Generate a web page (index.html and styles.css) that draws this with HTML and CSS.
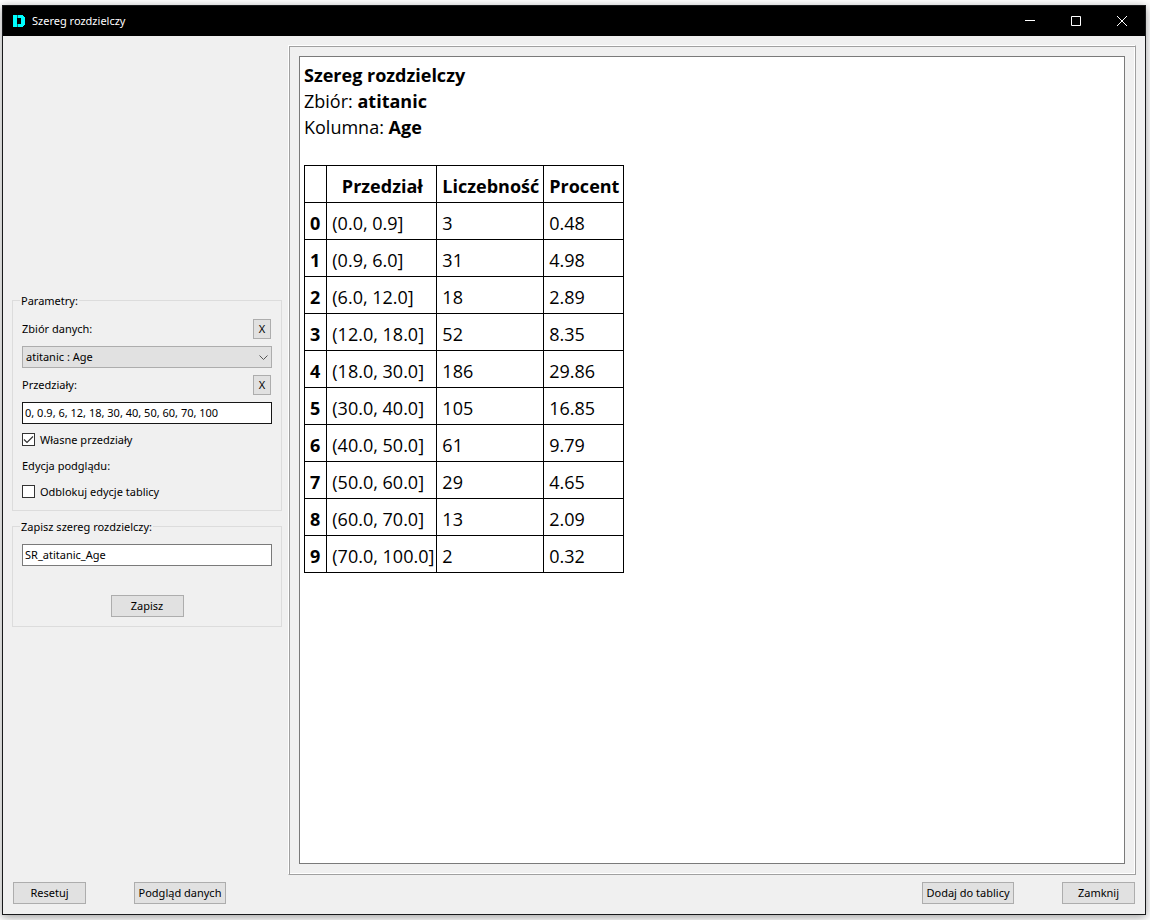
FILE: index.html
```html
<!DOCTYPE html>
<html lang="pl">
<head>
<meta charset="utf-8">
<title>Szereg rozdzielczy</title>
<link rel="stylesheet" href="styles.css">
</head>
<body>
<div class="window">
  <header class="titlebar">
    <svg class="logo" width="12" height="12" viewBox="0 0 12 12" aria-hidden="true"><path fill="#00ffff" d="M0 0H4V12H0ZM5 0H10V1H11V2H12V10H11V11H10V12H5V9H8V3H5Z"/><path fill="#007f7f" d="M4 0H5V3H4ZM4 9H5V12H4Z"/></svg>
    <h1 class="title">Szereg rozdzielczy</h1>
    <button class="caption" type="button" aria-label="Minimalizuj"><svg width="10" height="10" viewBox="0 0 10 10"><path d="M0 4.500H10"/></svg></button>
    <button class="caption" type="button" aria-label="Maksymalizuj"><svg width="10" height="10" viewBox="0 0 10 10"><path d="M.5 .5H9.500V9.500H.5Z"/></svg></button>
    <button class="caption" type="button" aria-label="Zamknij okno"><svg width="10" height="10" viewBox="0 0 10 10"><path d="M0 0L10 10M10 0L0 10"/></svg></button>
  </header>
  <main class="content">
    <form class="sidebar">
      <fieldset class="group params">
        <legend>Parametry:</legend>
        <div class="field-head"><label for="dataset">Zbiór danych:</label><button class="btn clear" type="button">X</button></div>
        <div class="combo">
          <select id="dataset" class="select"><option>atitanic : Age</option></select>
          <svg class="chevron" width="9" height="6" viewBox="0 0 9 6" aria-hidden="true"><path d="M.5 .5L4.500 4.500L8.500 .5"/></svg>
        </div>
        <div class="field-head"><label for="ranges">Przedziały:</label><button class="btn clear" type="button">X</button></div>
        <input id="ranges" class="input focused" type="text" value="0, 0.9, 6, 12, 18, 30, 40, 50, 60, 70, 100">
        <div class="options">
          <label class="check"><input type="checkbox" checked>Własne przedziały</label>
          <p class="caption-text">Edycja podglądu:</p>
          <label class="check"><input type="checkbox">Odblokuj edycje tablicy</label>
        </div>
      </fieldset>
      <fieldset class="group save">
        <legend>Zapisz szereg rozdzielczy:</legend>
        <input class="input" type="text" value="SR_atitanic_Age" aria-label="Zapisz szereg rozdzielczy">
        <button class="btn" type="button">Zapisz</button>
      </fieldset>
    </form>
    <div class="frame">
      <section class="preview">
        <h2>Szereg rozdzielczy</h2>
        <p>Zbiór: <b>atitanic</b></p>
        <p>Kolumna: <b>Age</b></p>
        <table class="series">
          <thead><tr><th></th><th>Przedział</th><th>Liczebność</th><th>Procent</th></tr></thead>
          <tbody>
            <tr><th>0</th><td>(0.0, 0.9]</td><td>3</td><td>0.48</td></tr>
            <tr><th>1</th><td>(0.9, 6.0]</td><td>31</td><td>4.98</td></tr>
            <tr><th>2</th><td>(6.0, 12.0]</td><td>18</td><td>2.89</td></tr>
            <tr><th>3</th><td>(12.0, 18.0]</td><td>52</td><td>8.35</td></tr>
            <tr><th>4</th><td>(18.0, 30.0]</td><td>186</td><td>29.86</td></tr>
            <tr><th>5</th><td>(30.0, 40.0]</td><td>105</td><td>16.85</td></tr>
            <tr><th>6</th><td>(40.0, 50.0]</td><td>61</td><td>9.79</td></tr>
            <tr><th>7</th><td>(50.0, 60.0]</td><td>29</td><td>4.65</td></tr>
            <tr><th>8</th><td>(60.0, 70.0]</td><td>13</td><td>2.09</td></tr>
            <tr><th>9</th><td>(70.0, 100.0]</td><td>2</td><td>0.32</td></tr>
          </tbody>
        </table>
      </section>
    </div>
  </main>
  <footer class="actions">
    <button class="btn" type="button">Resetuj</button>
    <button class="btn wide" type="button">Podgląd danych</button>
    <span class="spacer"></span>
    <button class="btn wide" type="button">Dodaj do tablicy</button>
    <button class="btn" type="button">Zamknij</button>
  </footer>
</div>
</body>
</html>
```
FILE: styles.css
```css
* { box-sizing: border-box; }

body {
  display: flex;
  min-height: 100vh;
  margin: 0;
  padding: 5px 4px 5px 2px;
  background: #fff;
  color: #000;
  font: 11px/16px "Segoe UI", "Noto Sans", "Open Sans", sans-serif;
}

h1, h2, p { margin: 0; font: inherit; }
button, input, select { font: inherit; color: inherit; }

.window {
  flex: 1;
  display: flex;
  flex-direction: column;
  border: 1px solid #18191b;
  background: #f0f0f0;
  box-shadow: 0 2px 9px rgba(0, 0, 0, .4);
}

.titlebar {
  display: flex;
  align-items: center;
  height: 30px;
  padding-left: 10px;
  background: #000;
  color: #fff;
}
.logo { margin-right: 7px; }
.title { flex: 1; }
.caption {
  display: flex;
  align-items: center;
  justify-content: center;
  width: 46px;
  height: 28px;
  padding: 0;
  border: 0;
  background: transparent;
}
.caption svg { fill: none; stroke: #fff; stroke-width: 1; }

.content {
  flex: 1;
  display: flex;
  gap: 6px;
  padding: 9px 9px 0;
}

.sidebar {
  display: flex;
  flex-direction: column;
  justify-content: center;
  gap: 8px;
  width: 270px;
  padding-bottom: 1px;
}
.group {
  display: flex;
  flex-direction: column;
  min-width: 0;
  margin: 0;
  padding: 10px 9px 9px;
  border: 1px solid #dcdcdc;
}
.group legend { margin-left: -2px; padding: 0 1px; }
.params { gap: 7px; }
.save { padding-top: 9px; gap: 29px; }
.save .btn { align-self: center; }

.field-head {
  display: flex;
  align-items: center;
  justify-content: space-between;
  height: 20px;
  padding-right: 1px;
}

.btn {
  width: 73px;
  height: 22px;
  padding: 0;
  border: 1px solid #adadad;
  background: #e1e1e1;
  white-space: nowrap;
}
.btn.wide { width: 92px; }
.btn.clear { width: 18px; height: 20px; }

.combo { position: relative; display: flex; }
.select {
  appearance: none;
  width: 100%;
  height: 22px;
  padding: 0 20px 0 3px;
  border: 1px solid #adadad;
  border-radius: 0;
  background: #e1e1e1;
}
.chevron {
  position: absolute;
  top: 9px;
  right: 4px;
  fill: none;
  stroke: #555;
  pointer-events: none;
}

.input {
  width: 100%;
  height: 22px;
  padding: 0 2px;
  border: 1px solid #7a7a7a;
  background: #fff;
}
.input.focused { border-color: #171717; }

.options { display: flex; flex-direction: column; gap: 8px; }
.caption-text { line-height: 18px; }
.check { display: flex; align-items: center; gap: 5px; height: 18px; }
.check input {
  appearance: none;
  width: 13px;
  height: 13px;
  margin: 0;
  border: 1px solid #333;
  background: #fff;
}
.check input:checked {
  background: #fff url("data:image/svg+xml,%3Csvg xmlns='http://www.w3.org/2000/svg' viewBox='0 0 11 11'%3E%3Cpath d='M1 5.500L4 8.500L10 2.500' fill='none' stroke='%23333' stroke-width='1.200'/%3E%3C/svg%3E");
}

.frame {
  flex: 1;
  display: flex;
  padding: 10px;
  border: 1px solid;
  border-color: #fff #a0a0a0 #a0a0a0 #fff;
  box-shadow: inset 1px 1px #a0a0a0, inset -1px -1px #fff;
}
.preview {
  flex: 1;
  padding: 5px 4px;
  border: 1px solid #7a7a7a;
  background: #fff;
  font-family: "Segoe UI", "Open Sans", "Noto Sans", sans-serif;
  font-size: 18px;
  line-height: 26px;
}
.preview h2 { font-weight: 700; }

.series { margin-top: 25px; border-collapse: collapse; }
.series th, .series td {
  height: 37px;
  padding: 4px 4px 0 5px;
  border: 1px solid #000;
  text-align: left;
}
.series th:first-child { padding-right: 6px; }
.series td:nth-child(2) { padding-right: 2px; }
.series thead th { text-align: center; }

.actions {
  display: flex;
  gap: 48px;
  padding: 7px 10px 10px;
}
.spacer { flex: 1; }
```
